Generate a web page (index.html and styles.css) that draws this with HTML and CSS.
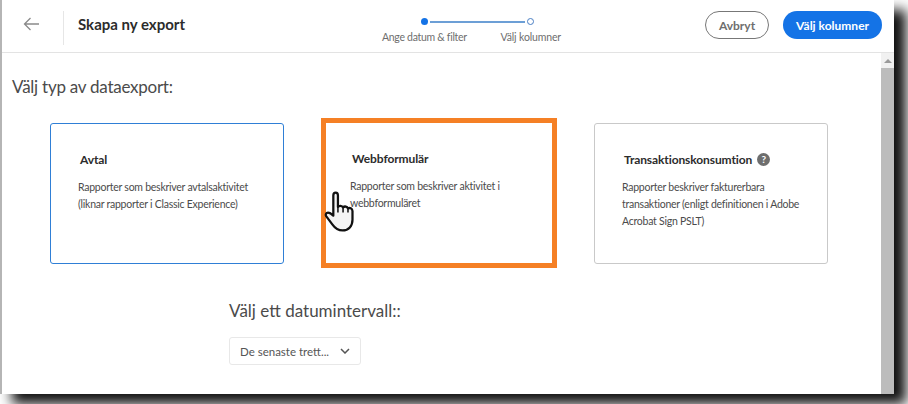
FILE: index.html
```html
<!DOCTYPE html>
<html lang="sv">
<head>
    <meta charset="UTF-8">
    <title>Skapa ny export</title>
    <link rel="stylesheet" href="styles.css">
</head>
<body>
    <div class="window">
        <header class="topbar">
            <button class="back-btn" aria-label="Tillbaka">
                <svg width="16" height="14" viewBox="0 0 16 14"><path d="M16 7H1.500M7.500 1 1.500 7l6 6" fill="none" stroke="#8a8a8a" stroke-width="1.300"/></svg>
            </button>
            <h1 class="title">Skapa ny export</h1>
            <div class="stepper">
                <div class="step-track">
                    <span class="dot dot-filled"></span>
                    <span class="line"></span>
                    <span class="dot dot-open"></span>
                </div>
                <div class="step-labels">
                    <span>Ange datum &amp; filter</span>
                    <span class="step-next">Välj kolumner</span>
                </div>
            </div>
            <div class="actions">
                <button class="btn btn-cancel">Avbryt</button>
                <button class="btn btn-primary">Välj kolumner</button>
            </div>
        </header>
        <div class="body-row">
            <main class="content">
                <h2 class="section-title type-title">Välj typ av dataexport:</h2>
                <div class="cards">
                    <div class="card card-selected">
                        <h3>Avtal</h3>
                        <p>Rapporter som beskriver avtalsaktivitet (liknar rapporter i Classic Experience)</p>
                    </div>
                    <div class="card card-marked">
                        <h3>Webbformulär</h3>
                        <p>Rapporter som beskriver aktivitet i webbformuläret</p>
                        <svg class="hand" width="33" height="41" viewBox="0 0 32 40">
                            <path d="M9 24V4.500C9 2.500 10 1.500 11.300 1.500 12.700 1.500 13.500 2.500 13.500 4.500V15.500C14.500 14 17.500 14 18.500 16 20 14.500 22.500 15 23.300 17 25 16 27.500 17 27.700 19.500V28C27.700 34 24 38.500 18 38.500 13 38.500 10.500 36 8 32.500L2 24.500C1 22.800 2 21 3.800 21 5.500 21 7.500 22.500 9 24Z" fill="#f4f4f4" stroke="#111" stroke-width="2.200" stroke-linejoin="round"/>
                            <path d="M13.500 15.500V21M18.500 16V21M23.300 17V21" fill="none" stroke="#111" stroke-width="1.500"/>
                        </svg>
                    </div>
                    <div class="card">
                        <h3>Transaktionskonsumtion <span class="help">?</span></h3>
                        <p>Rapporter beskriver fakturerbara transaktioner (enligt definitionen i Adobe Acrobat Sign PSLT)</p>
                    </div>
                </div>
                <div class="date-range">
                    <h2 class="section-title">Välj ett datumintervall::</h2>
                    <button class="select">
                        De senaste trett...
                        <svg width="10" height="6" viewBox="0 0 10 6"><path d="M1 1l4 4 4-4" fill="none" stroke="#555" stroke-width="1.500"/></svg>
                    </button>
                </div>
            </main>
            <div class="scrollbar">
                <span class="scroll-up"></span>
                <span class="scroll-thumb"></span>
            </div>
        </div>
    </div>
</body>
</html>
```

FILE: styles.css
```css
html, body {
    margin: 0;
    height: 100%;
    overflow: hidden;
}
body {
    background: #fff;
    font-family: Lato, sans-serif;
    color: #333;
}
button {
    font-family: inherit;
}
.window {
    width: 892px;
    height: 394px;
    background: #fff;
    border-left: 2px solid #b5b5b5;
    box-shadow: 12px 10px 12px #111;
    display: flex;
    flex-direction: column;
}
.topbar {
    height: 52px;
    flex: none;
    border-bottom: 1px solid #e3e3e3;
    display: flex;
    align-items: center;
    position: relative;
}
.back-btn {
    background: none;
    border: none;
    width: 62px;
    height: 34px;
    margin-top: 4px;
    border-right: 1px solid #e6e6e6;
    display: flex;
    align-items: center;
    padding: 0 0 8px 21px;
}
.title {
    margin: -4px 0 0 14px;
    font-size: 15px;
    font-weight: 700;
    color: #2c2c2c;
}
.stepper {
    position: absolute;
    left: 380px;
    top: 18px;
    width: 179px;
}
.step-track {
    display: flex;
    align-items: center;
    margin-left: 39px;
    width: 113px;
    gap: 2px;
}
.dot {
    width: 7px;
    height: 7px;
    border-radius: 50%;
    box-sizing: border-box;
}
.dot-filled { background: #1473e6; }
.dot-open { border: 1.500px solid #4a7fc4; }
.line {
    flex: 1;
    height: 2px;
    background: #6c9fd6;
}
.step-labels {
    display: flex;
    justify-content: space-between;
    margin-top: 6px;
    font-size: 10.500px;
    letter-spacing: -0.3px;
    color: #6e6e6e;
}
.step-next {
    letter-spacing: -0.15px;
}
.actions {
    margin-left: auto;
    margin-right: 12px;
    display: flex;
    gap: 14px;
    margin-top: -2px;
}
.btn {
    height: 28px;
    border-radius: 14px;
    font-size: 12px;
    font-weight: 700;
    padding: 0;
}
.btn-cancel {
    width: 64px;
    background: #fff;
    border: 1.500px solid #777;
    color: #6e6e6e;
}
.btn-primary {
    width: 99px;
    background: #1473e6;
    border: none;
    color: #fff;
}
.body-row {
    flex: 1;
    display: flex;
    min-height: 0;
}
.content {
    flex: 1;
    padding: 24px 0 0 10px;
}
.section-title {
    margin: 0;
    font-size: 17px;
    line-height: 20px;
    font-weight: 400;
    color: #4b4b4b;
}
.type-title {
    letter-spacing: -0.25px;
}
.cards {
    display: flex;
    gap: 37px;
    align-items: center;
    margin: 21px 0 0 38px;
}
.card {
    width: 234px;
    height: 141px;
    box-sizing: border-box;
    background: #fff;
    border: 1px solid #c9c9c9;
    border-radius: 3px;
    padding: 27px 20px 0 27px;
    position: relative;
}
.card-selected {
    border-color: #2f7fd6;
}
.card-marked {
    width: 236px;
    height: 150px;
    border: 5px solid #f58025;
    border-radius: 0;
    padding: 27px 20px 0 24px;
}
.card h3 {
    margin: 0 0 0 2px;
    font-size: 12px;
    letter-spacing: -0.1px;
    font-weight: 700;
    line-height: 18px;
    color: #2c2c2c;
    display: flex;
    align-items: center;
    gap: 5px;
}
.card p {
    margin: 10px 0 0;
    font-size: 10.500px;
    letter-spacing: -0.25px;
    line-height: 17px;
    color: #4b4b4b;
}
.help {
    width: 13px;
    height: 13px;
    border-radius: 50%;
    background: #6e6e6e;
    color: #fff;
    font-size: 10px;
    font-weight: 700;
    line-height: 13px;
    text-align: center;
}
.hand {
    position: absolute;
    left: -2px;
    top: 68px;
}
.date-range {
    margin: 33px 0 0 217px;
}
.select {
    margin-top: 16px;
    width: 132px;
    height: 28px;
    display: flex;
    align-items: center;
    justify-content: space-between;
    background: #fff;
    border: 1px solid #e8e8e8;
    border-radius: 3px;
    padding: 0 10px;
    font-size: 11.500px;
    color: #555;
}
.scrollbar {
    width: 13px;
    flex: none;
    background: #f1f1f1;
    display: flex;
    flex-direction: column;
}
.scroll-up {
    height: 15px;
    position: relative;
}
.scroll-up::before {
    content: "";
    position: absolute;
    left: 3px;
    top: 6px;
    border-left: 4px solid transparent;
    border-right: 4px solid transparent;
    border-bottom: 4px solid #9a9a9a;
}
.scroll-thumb {
    flex: 1;
    background: #bcbcbc;
}
```
